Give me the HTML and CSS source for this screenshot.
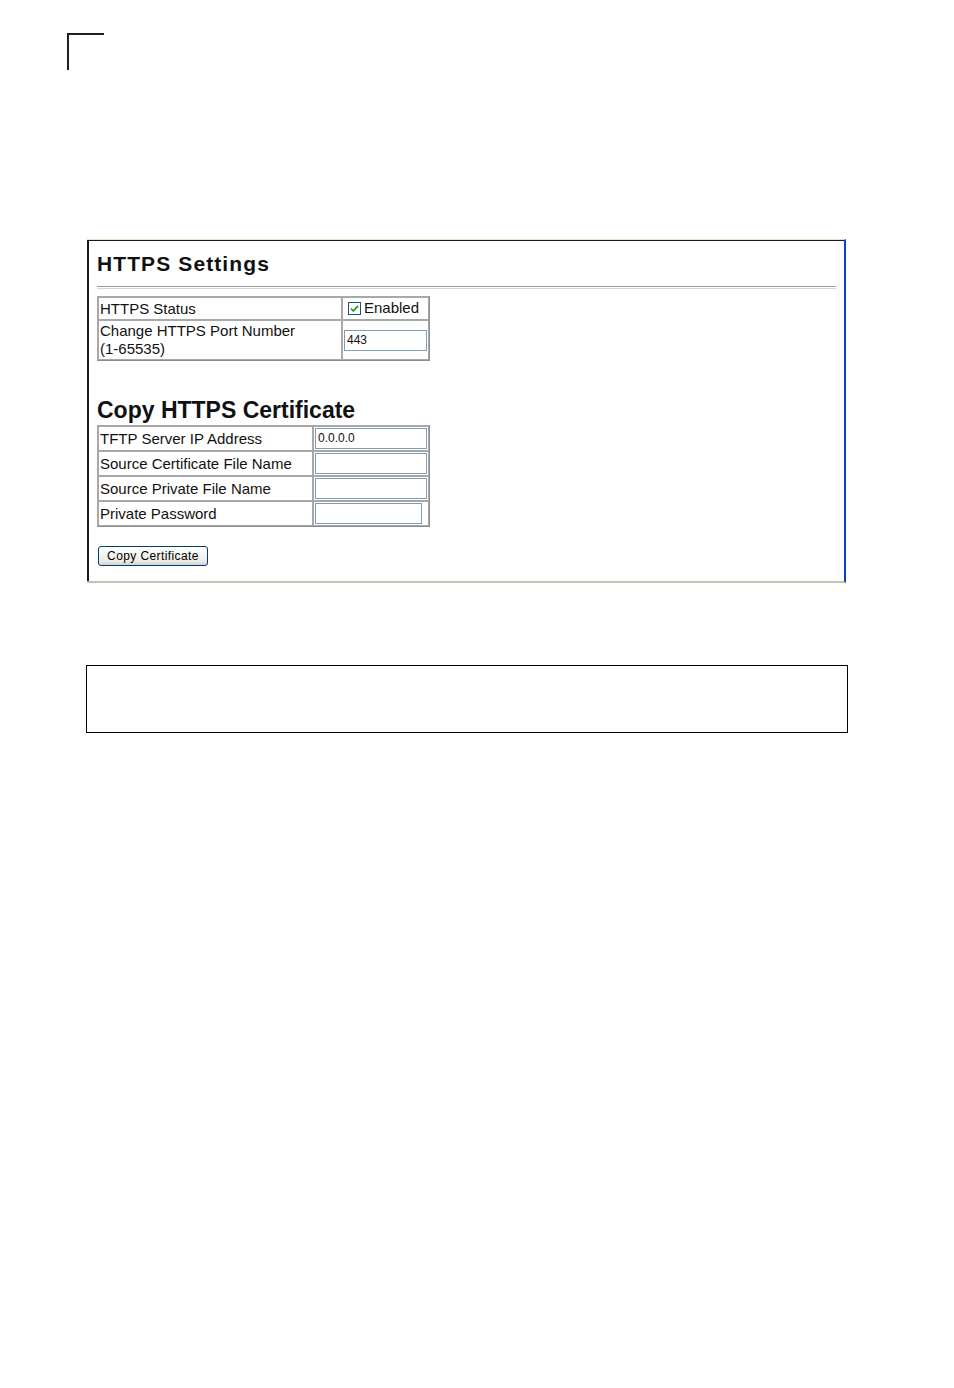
FILE: index.html
```html
<!DOCTYPE html>
<html>
<head>
<meta charset="utf-8">
<link rel="stylesheet" href="styles.css">
</head>
<body>
<div class="page">
  <div class="corner"></div>
  <div class="shot">
    <div class="win">
      <h1 class="title">HTTPS Settings</h1>
      <div class="rule"></div>
      <table class="grid grid-a">
        <tr class="r1">
          <td class="lab lab-a">HTTPS Status</td>
          <td class="val"><span class="chk"><svg width="13" height="13" viewBox="0 0 13 13"><rect x="0.5" y="0.5" width="12" height="12" fill="#fff" stroke="#1c5180"/><path d="M3 6.5 L5.3 9 L10 3.8" fill="none" stroke="#21a121" stroke-width="1.8"/></svg></span><span class="enabled">Enabled</span></td>
        </tr>
        <tr class="r2">
          <td class="lab lab-a">Change HTTPS Port Number<br>(1-65535)</td>
          <td class="val"><div class="inp inp-port">443</div></td>
        </tr>
      </table>
      <h2 class="title2">Copy HTTPS Certificate</h2>
      <table class="grid grid-b">
        <tr class="rb"><td class="lab lab-b">TFTP Server IP Address</td><td class="val"><div class="inp">0.0.0.0</div></td></tr>
        <tr class="rb"><td class="lab lab-b">Source Certificate File Name</td><td class="val"><div class="inp"></div></td></tr>
        <tr class="rb"><td class="lab lab-b">Source Private File Name</td><td class="val"><div class="inp"></div></td></tr>
        <tr class="rb"><td class="lab lab-b">Private Password</td><td class="val"><div class="inp inp-pw"></div></td></tr>
      </table>
      <div class="btn">Copy Certificate</div>
    </div>
  </div>
  <div class="note"></div>
</div>
</body>
</html>
```

FILE: styles.css
```css
html, body { margin: 0; padding: 0; background: #fff; }
body { font-family: "Liberation Sans", Arial, sans-serif; color: #000; }
.page { width: 954px; height: 1388px; position: relative; }
.corner {
  margin-left: 67px; margin-top: 33px;
  width: 35px; height: 35px;
  border-top: 2px solid #231f20; border-left: 2px solid #231f20;
}
.shot {
  margin-left: 87px; margin-top: 169px;
  width: 757px; height: 341px;
  border-top: 1px solid #e4e2c6;
  border-right: 2px solid #0b3fc8;
  border-bottom: 2px solid #c4c1ac;
}
.win {
  height: 341px;
  border-top: 1px solid #1a1a1a;
  border-left: 2px solid #1a1a1a;
  box-sizing: border-box;
  padding-left: 8px;
  padding-right: 8px;
}
.title {
  margin: 0; padding-top: 12px;
  font-size: 21px; line-height: 22px; font-weight: bold;
  letter-spacing: 1.1px;
  color: #111;
}
.rule {
  margin-top: 11px; margin-right: 0;
  height: 1px; border-top: 1px solid #9c9c9c; border-bottom: 1px solid #d6d6d6;
}
.grid {
  border-collapse: separate; border-spacing: 0;
  border: 1px solid #a8a8a8;
  border-right-color: #8c8c8c; border-bottom-color: #8c8c8c;
  font-size: 15px;
  color: #111;
}
.grid td {
  border: 1px solid #a8a8a8;
  padding: 0 1px;
  vertical-align: middle;
}
.grid-a { margin-top: 7px; width: 333px; }
.r1 td { height: 21px; }
.r2 td { height: 38px; line-height: 18px; }
.lab-a { width: 241px; }
.val { padding: 0 1px; }
.chk { display: inline-block; vertical-align: -2px; margin-left: 4px; margin-right: 3px; }
.inp {
  box-sizing: border-box;
  height: 21px; width: 112px;
  border: 1px solid #7f9db9;
  font-size: 12px; line-height: 19px; padding-left: 2px;
  background: #fff;
}
.inp-port { width: 83px; }
.inp-pw { width: 107px; }
.title2 {
  margin: 0; margin-top: 36px;
  font-size: 23px; line-height: 26px; font-weight: bold;
  color: #111;
}
.grid-b { margin-top: 2px; width: 333px; }
.rb td { height: 23px; }
.lab-b { width: 211px; }
.btn {
  margin-top: 19px; margin-left: 1px;
  width: 110px; height: 20px; box-sizing: border-box;
  border: 1px solid #003c74; border-radius: 3px;
  background: linear-gradient(#ffffff, #ecebe6 80%, #d6d0c5);
  font-size: 12px; letter-spacing: 0.4px; line-height: 18px; text-align: center;
}
.note {
  margin-left: 86px; margin-top: 82px;
  width: 760px; height: 66px;
  border: 1px solid #000;
}
```
